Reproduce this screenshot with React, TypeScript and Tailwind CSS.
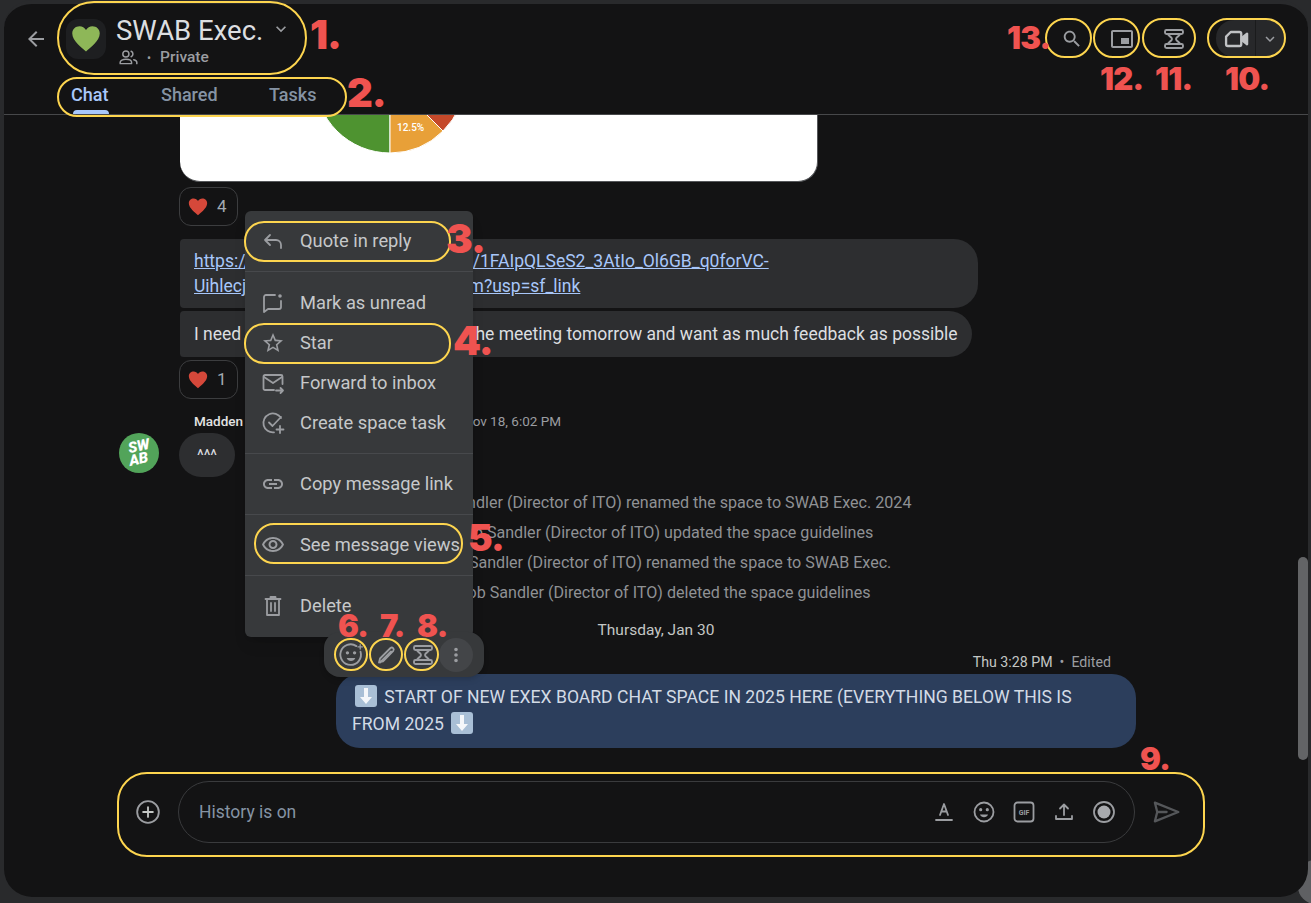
import React from 'react'

const gray = '#9b9da1'

const Filled = ({ d, size = 24, color = gray }: { d: string; size?: number; color?: string }) => (
  <svg width={size} height={size} viewBox="0 0 24 24" fill={color}>
    <path d={d} />
  </svg>
)

const Stroke = ({ size = 24, color = gray, width = 2, children }: { size?: number; color?: string; width?: number; children: React.ReactNode }) => (
  <svg width={size} height={size} viewBox="0 0 24 24" fill="none" stroke={color} strokeWidth={width} strokeLinecap="round" strokeLinejoin="round">
    {children}
  </svg>
)

const Spool = ({ size = 24 }: { size?: number }) => (
  <Stroke size={size} width={1.900}>
    <rect x="3" y="3" width="18" height="4" rx="1.500" />
    <rect x="3" y="17" width="18" height="4" rx="1.500" />
    <path d="M6 7c0 2 4 2.800 4 5s-4 3-4 5M18 7c0 2-4 2.800-4 5s4 3 4 5" />
  </Stroke>
)

const Smile = ({ size = 24 }: { size?: number }) => (
  <Stroke size={size} width={1.800}>
    <circle cx="12" cy="12" r="9.500" />
    <circle cx="8.700" cy="9.700" r=".7" fill={gray} />
    <circle cx="15.300" cy="9.700" r=".7" fill={gray} />
    <path d="M8 14.500h8c-.6 1.700-2.200 2.700-4 2.700s-3.400-1-4-2.700z" fill={gray} stroke="none" />
  </Stroke>
)

// reaction smile with the little plus at its top right
const AddReaction = () => (
  <Stroke size={26} width={1.700}>
    <path d="M17 3.800A9.500 9.500 0 1 0 20.800 9" />
    <circle cx="8.700" cy="10" r=".7" fill={gray} />
    <circle cx="15.300" cy="10" r=".7" fill={gray} />
    <path d="M8 14.800h8c-.6 1.700-2.200 2.700-4 2.700s-3.400-1-4-2.700z" fill={gray} stroke="none" />
    <path d="M20.500 2.500v4M18.500 4.500h4" strokeWidth="1.200" />
  </Stroke>
)

const Heart = ({ color, size = 20 }: { color: string; size?: number }) => (
  <svg width={size} height={size} viewBox="0 0 24 24" fill={color}>
    <path d="M12 22C9 19 1 13.500 1 7.500 1 4 3.700 1.800 6.800 1.800c2.200 0 4.100 1.100 5.200 3 1.100-1.900 3-3 5.200-3C20.300 1.800 23 4 23 7.500 23 13.500 15 19 12 22z" />
  </svg>
)

const ArrowEmoji = () => (
  <svg width="24" height="24" viewBox="0 0 24 24" className="mx-[2px] inline-block align-[-5px]">
    <rect x="1" y="1" width="22" height="22" rx="3" fill="#a9bfd6" />
    <path d="M10 4h4v9h4l-6 7-6-7h4z" fill="#f5f7fa" />
  </svg>
)

const Chip = ({ count, className }: { count: string; className: string }) => (
  <div className={`flex h-[39px] w-[59px] items-center gap-[9px] rounded-xl border border-[#3c3d3f] pl-2 ${className}`}>
    <Heart color="#d5483a" />
    <span className="text-[17px] text-[#a2a9b1]">{count}</span>
  </div>
)

const Divider = () => <div className="h-px bg-[#47494c]" />

const MenuRow = ({ icon, label }: { icon: React.ReactNode; label: string }) => (
  <div className="flex h-10 items-center">
    <div className="flex w-[55px] justify-center">{icon}</div>
    <span className="text-[18.300px] font-normal whitespace-nowrap text-[#c6c8ca]">{label}</span>
  </div>
)

const ovals = [
  'left-[57px] top-px h-[74px] w-[250px] rounded-[37px]',
  'left-[57px] top-[77px] h-[40px] w-[290px] rounded-[20px]',
  'left-[244px] top-[221px] h-[41px] w-[207px] rounded-[20px]',
  'left-[244px] top-[323px] h-[41px] w-[207px] rounded-[20px]',
  'left-[254px] top-[523px] h-[41px] w-[209px] rounded-[20px]',
  'left-[334px] top-[638px] h-[33px] w-[34px] rounded-full',
  'left-[369px] top-[638px] h-[33px] w-[34px] rounded-full',
  'left-[404px] top-[638px] h-[33px] w-[35px] rounded-full',
  'left-[117px] top-[772px] h-[85px] w-[1088px] rounded-[30px]',
  'left-[1207px] top-[18px] h-[40px] w-[79px] rounded-[20px]',
  'left-[1142px] top-[18px] h-[40px] w-[54px] rounded-[20px]',
  'left-[1093px] top-[18px] h-[40px] w-[47px] rounded-[20px]',
  'left-[1045px] top-[18px] h-[40px] w-[47px] rounded-[20px]',
]

const numbers = [
  { label: '1.', className: 'left-[310px] top-[15px] text-[40px]' },
  { label: '2.', className: 'left-[347px] top-[73px] text-[40px]' },
  { label: '3.', className: 'left-[446px] top-[219px] text-[40px]' },
  { label: '4.', className: 'left-[453px] top-[321px] text-[40px]' },
  { label: '5.', className: 'left-[468px] top-[519px] text-[37px]' },
  { label: '6.', className: 'left-[338px] top-[610px] text-[31px]' },
  { label: '7.', className: 'left-[380px] top-[610px] text-[31px]' },
  { label: '8.', className: 'left-[417px] top-[610px] text-[31px]' },
  { label: '9.', className: 'left-[1140px] top-[743px] text-[31px]' },
  { label: '10.', className: 'left-[1225px] top-[63px] text-[31px]' },
  { label: '11.', className: 'left-[1155px] top-[63px] text-[31px]' },
  { label: '12.', className: 'left-[1100px] top-[63px] text-[31px]' },
  { label: '13.', className: 'left-[1007px] top-[22px] text-[31px]' },
]

export default function App() {
  return (
    <div className="relative h-[903px] w-[1311px] overflow-hidden bg-[#292a2c] font-['Roboto',sans-serif]">
      <div className="absolute -right-[22px] top-[860px] h-[44px] w-[35px] rounded-full bg-[#5f6063]" />

      {/* Panel */}
      <div className="relative ml-1 flex h-[897px] w-[1304px] flex-col overflow-hidden rounded-[28px] border-t-4 border-[#292a2c] bg-[#131314]">
        {/* Header */}
        <header className="relative h-[111px] shrink-0 border-b border-[#47484a]">
          <div className="flex items-start justify-between pr-[24px]">
            <div className="flex items-start pl-[20px] pt-[15px]">
              <div className="mt-[8px]"><Filled size={24} d="M20 11H7.830l5.590-5.590L12 4l-8 8 8 8 1.410-1.410L7.830 13H20v-2z" /></div>
              <div className="ml-[18px] flex h-10 w-10 items-center justify-center rounded-xl bg-[#1e1f21]">
                <Heart color="#8eb758" size={30} />
              </div>
              <div className="ml-[10px] -mt-[4px]">
                <div className="flex h-[32px] items-center">
                  <span className="text-[27.500px] leading-[32px] text-[#dcdee0]">SWAB Exec.</span>
                  <span className="ml-[8px] -mt-1"><Filled size={20} d="M16.590 8.590L12 13.170 7.410 8.590 6 10l6 6 6-6z" /></span>
                </div>
                <div className="-mt-[1px] flex items-center pl-[2px]">
                  <Stroke size={21} width={1.700}>
                    <circle cx="9" cy="8" r="3.500" />
                    <path d="M2.500 19v-1.500c0-2.200 3-3.500 6.500-3.500s6.500 1.300 6.500 3.500V19zM15 4.800a3.500 3.500 0 0 1 0 6.400M18 14.500c2 .6 3.500 1.600 3.500 3V19" />
                  </Stroke>
                  <span className="ml-[8px] text-xs text-[#9b9da1]">•</span>
                  <span className="ml-[9px] text-[15.500px] font-medium text-[#9b9da1]">Private</span>
                </div>
              </div>
            </div>
            <div className="flex items-center pt-[16px]">
              <Filled size={22} d="M15.500 14h-.790l-.280-.270C15.410 12.590 16 11.110 16 9.500 16 5.910 13.090 3 9.500 3S3 5.910 3 9.500 5.910 16 9.500 16c1.610 0 3.090-.590 4.230-1.570l.270.280v.790l5 4.990L20.490 19l-4.990-5zm-6 0C7.010 14 5 11.990 5 9.500S7.010 5 9.500 5 14 7.010 14 9.500 11.990 14 9.500 14z" />
              <div className="ml-[27px]"><Filled d="M19 11h-8v6h8v-6zm2-8H3c-1.100 0-2 .9-2 2v14c0 1.100.9 1.980 2 1.980h18c1.100 0 2-.880 2-1.980V5c0-1.100-.9-2-2-2zm0 16.010H3V4.980h18v14.030z" /></div>
              <div className="ml-[28px]"><Spool /></div>
              <div className="ml-[30px] flex h-[37px] w-[68px] overflow-hidden rounded-[18px] bg-[#27282a]">
                <div className="flex w-[40px] items-center justify-center border-r border-[#1a1b1c]">
                  <Stroke size={28} color="#c0c2c4">
                    <path d="M7.500 6H15a1.500 1.500 0 0 1 1.500 1.500v9A1.500 1.500 0 0 1 15 18H5a1.500 1.500 0 0 1-1.500-1.500V10z" />
                    <path d="M17 11l4.500-3.500v9L17 13z" fill="#c0c2c4" />
                  </Stroke>
                </div>
                <div className="flex flex-1 items-center justify-center">
                  <Filled size={18} d="M16.590 8.590L12 13.170 7.410 8.590 6 10l6 6 6-6z" />
                </div>
              </div>
            </div>
          </div>
          {/* Tabs */}
          <nav className="absolute bottom-0 left-[67px] flex h-[33px] text-[18px] leading-6 font-medium">
            <div className="relative w-[90px] pt-[2px] text-[#a8c7fa]">
              Chat
              <div className="absolute bottom-0 left-[2px] h-[4px] w-[36px] rounded-t bg-[#a8c7fa]" />
            </div>
            <div className="w-[108px] pt-[2px] text-[#8593a4]">Shared</div>
            <div className="pt-[2px] text-[#8593a4]">Tasks</div>
          </nav>
        </header>

        {/* Messages */}
        <main className="min-h-0 flex-1 overflow-hidden">
          <div className="ml-[176px] h-[67px] w-[638px] overflow-hidden rounded-b-[20px] border-r border-b border-[#55575a] bg-white">
            <svg width="637" height="67" viewBox="0 0 637 67">
              <path d="M210 -37L210 38A75 75 0 0 1 135 -37Z" fill="#4e9330" stroke="#fff" />
              <path d="M210 -37L263 16A75 75 0 0 1 210 38Z" fill="#e8a038" stroke="#fff" />
              <path d="M210 -37L285 -37A75 75 0 0 1 263 16Z" fill="#c5492a" stroke="#fff" />
              <text x="217" y="16" fontSize="10" fontWeight="500" fill="#fff">12.5%</text>
            </svg>
          </div>
          <Chip count="4" className="ml-[175px] mt-[5px]" />
          <div className="ml-[176px] mt-[13px] h-[69px] w-[798px] rounded-[4px_24px_24px_4px] bg-[#2d2e30] px-[14px] py-[10px] text-[17.500px] leading-[25px] whitespace-nowrap text-[#a8c7fa] underline">
            https://docs.google.com/forms/d/e/1FAIpQLSeS2_3AtIo_Ol6GB_q0forVC-<br />
            Uihlecjw5Tq0vXnLrP2bKeZ/viewform?usp=sf_link
          </div>
          <div className="ml-[176px] mt-[3px] flex h-[46px] w-[792px] items-center rounded-[4px_24px_24px_4px] bg-[#2d2e30] px-[14px] text-[17.500px] whitespace-nowrap text-[#dcdee0]">
            I need to send this new link form at the meeting tomorrow and want as much feedback as possible
          </div>
          <Chip count="1" className="ml-[175px] mt-[3px]" />
          <div className="ml-[190px] mt-[14px] flex h-4 items-center whitespace-nowrap">
            <span className="w-[269px] text-[13.500px] font-medium text-[#e3e3e3]">Madden Reilly</span>
            <span className="text-[13.500px] text-[#9b9da1]">Nov 18, 6:02 PM</span>
          </div>
          <div className="mt-1 flex items-start pl-[115px]">
            <div className="flex h-10 w-10 flex-col items-center justify-center rounded-full bg-[#52a45a] text-[15px] leading-[13px] font-black text-white italic">
              <span className="-rotate-12">SW</span>
              <span className="-rotate-12">AB</span>
            </div>
            <div className="ml-5 h-[44px] w-[56px] rounded-[22px] bg-[#2d2e30] pt-[11px] text-center text-base text-[#dcdee0]">^^^</div>
          </div>
          <div className="mt-[11px] text-center text-[16.100px] leading-[30px] text-[#8f9194]">
            <div>Jacob Sandler (Director of ITO) renamed the space to SWAB Exec. 2024</div>
            <div>Jacob Sandler (Director of ITO) updated the space guidelines</div>
            <div>Jacob Sandler (Director of ITO) renamed the space to SWAB Exec.</div>
            <div>Jacob Sandler (Director of ITO) deleted the space guidelines</div>
          </div>
          <div className="mt-[10px] text-center text-[15.500px] leading-6 text-[#c4c7c5]">Thursday, Jan 30</div>
          <div className="mt-3 h-4 pr-[197px] text-right text-[14.200px] leading-4 text-[#9b9da1]">
            <span className="text-[#c4c7c5]">Thu 3:28 PM</span> &nbsp;•&nbsp; Edited
          </div>
          <div className="ml-[332px] mt-1 h-[74px] w-[800px] rounded-[24px] bg-[#2c3e5c] py-[10px] pl-[16px] pr-[50px] text-[17.600px] leading-[27px] text-[#d3dbe6]">
            <ArrowEmoji /> START OF NEW EXEX BOARD CHAT SPACE IN 2025 HERE (EVERYTHING BELOW THIS IS FROM 2025 <ArrowEmoji />
          </div>
        </main>

        {/* Composer */}
        <div className="flex shrink-0 items-center pb-[54px] pl-[131px]">
          <Stroke size={26} width={1.700}>
            <circle cx="12" cy="12" r="10" />
            <path d="M12 7.500v9M7.500 12h9" stroke="#c4c7c5" />
          </Stroke>
          <div className="ml-[17px] flex h-[62px] w-[957px] items-center rounded-[31px] border border-[#3a3b3d] pl-5 pr-[18px]">
            <span className="flex-1 text-[17.500px] text-[#8593a4]">History is on</span>
            <div className="flex items-center gap-[16px]">
              <Stroke size={24} width={1.800}>
                <path d="M8 15l4-11 4 11M9.300 11.500h5.400M4 20h16" />
              </Stroke>
              <Smile />
              <Stroke size={24} width={1.800}>
                <rect x="2.500" y="2.500" width="19" height="19" rx="3" />
                <text x="12" y="14.500" fontSize="7" fontWeight="700" textAnchor="middle" fill={gray} stroke="none">GIF</text>
              </Stroke>
              <Stroke size={24} width={1.800}>
                <path d="M12 15V5M8 8.500L12 4.500l4 4M4 16v3h16v-3" />
              </Stroke>
              <svg width="24" height="24" viewBox="0 0 24 24">
                <circle cx="12" cy="12" r="10" fill="none" stroke={gray} strokeWidth="1.800" />
                <circle cx="12" cy="12" r="6.500" fill="#a8aaae" />
              </svg>
            </div>
          </div>
          <div className="ml-[17px]">
            <Stroke size={28} color="#55575a" width={2}>
              <path d="M2.500 4l20 8-20 8 2-8zM4.500 12h8" />
            </Stroke>
          </div>
        </div>

        {/* Scrollbar */}
        <div className="absolute right-0 top-[553px] h-[203px] w-[10px] rounded-full bg-[#636466]" />
      </div>

      {/* Context menu */}
      <div className="absolute left-[245px] top-[211px] w-[228px] rounded-md bg-[#37393b] pb-px shadow-lg">
        <div className="py-[10px]">
          <MenuRow label="Quote in reply" icon={<Stroke size={24} width={1.800}><path d="M9 6L4 11l5 5M4 11h11a5 5 0 0 1 5 5v3" /></Stroke>} />
        </div>
        <Divider />
        <div className="pb-[10px] pt-[11px]">
          <MenuRow label="Mark as unread" icon={<Stroke size={24} width={1.800}><path d="M14 4H5a2 2 0 0 0-2 2v15l4-3h11a2 2 0 0 0 2-2v-6" /><circle cx="19" cy="5" r="1.800" fill={gray} stroke="none" /></Stroke>} />
          <MenuRow label="Star" icon={<Filled d="M22 9.240l-7.190-.620L12 2 9.190 8.630 2 9.240l5.460 4.730L5.820 21 12 17.270 18.180 21l-1.630-7.030L22 9.240zM12 15.400l-3.760 2.270 1-4.280-3.320-2.880 4.380-.380L12 6.100l1.710 4.040 4.380.380-3.320 2.880 1 4.280L12 15.400z" />} />
          <MenuRow label="Forward to inbox" icon={<Stroke size={24} width={1.800}><path d="M13 19H4a1.500 1.500 0 0 1-1.500-1.500v-12A1.500 1.500 0 0 1 4 4h16a1.500 1.500 0 0 1 1.500 1.500V13" /><path d="M3 6l9 6 9-6M15 19.500h7M19.500 17l2.500 2.500-2.500 2.500" /></Stroke>} />
          <MenuRow label="Create space task" icon={<Stroke size={24} width={1.800}><path d="M20 7A9.500 9.500 0 1 0 13 21.400M8 11.500l3.500 3.500L20 6M19 15v7M15.500 18.500h7" /></Stroke>} />
        </div>
        <Divider />
        <div className="py-[10px]">
          <MenuRow label="Copy message link" icon={<Filled d="M3.900 12c0-1.710 1.390-3.100 3.100-3.100h4V7H7c-2.760 0-5 2.240-5 5s2.240 5 5 5h4v-1.900H7c-1.710 0-3.100-1.390-3.100-3.100zM8 13h8v-2H8v2zm9-6h-4v1.900h4c1.710 0 3.100 1.390 3.100 3.100s-1.390 3.100-3.100 3.100h-4V17h4c2.760 0 5-2.240 5-5s-2.240-5-5-5z" />} />
        </div>
        <Divider />
        <div className="py-[10px]">
          <MenuRow label="See message views" icon={<Filled d="M12 6c3.790 0 7.170 2.130 8.820 5.500C19.170 14.870 15.790 17 12 17s-7.170-2.130-8.820-5.500C4.830 8.130 8.210 6 12 6m0-2C7 4 2.730 7.110 1 11.500 2.730 15.890 7 19 12 19s9.270-3.110 11-7.500C21.270 7.110 17 4 12 4zm0 5c1.380 0 2.500 1.120 2.500 2.500S13.380 14 12 14s-2.500-1.120-2.500-2.500S10.620 9 12 9m0-2c-2.480 0-4.500 2.020-4.500 4.500S9.520 16 12 16s4.500-2.020 4.500-4.500S14.480 7 12 7z" />} />
        </div>
        <Divider />
        <div className="py-[10px]">
          <MenuRow label="Delete" icon={<Stroke size={24} width={1.800}><path d="M4.500 5h15M6 5v16h12V5M10 9v8M14 9v8M9.500 5V3h5v2" /></Stroke>} />
        </div>
      </div>

      {/* Message toolbar */}
      <div className="absolute left-[324px] top-[632px] flex h-[45px] w-[160px] items-center rounded-2xl bg-[#37393b] shadow-md">
        <div className="ml-[14px]"><AddReaction /></div>
        <div className="ml-[10px]">
          <Stroke size={24} width={1.800}>
            <path d="M5 19.500l1-4L16.500 5a2 2 0 0 1 2.800 2.800L8.800 18.500zM17 8.500L6 19.500" />
          </Stroke>
        </div>
        <div className="ml-[13px]"><Spool /></div>
        <div className="ml-[4px] flex h-[34px] w-[34px] items-center justify-center rounded-full bg-[#434548]">
          <Filled size={22} d="M12 8a2 2 0 1 0 0-4 2 2 0 0 0 0 4zm0 2a2 2 0 1 0 0 4 2 2 0 0 0 0-4zm0 6a2 2 0 1 0 0 4 2 2 0 0 0 0-4z" />
        </div>
      </div>

      {/* Annotations */}
      {ovals.map((className) => (
        <div key={className} className={`absolute border-2 border-[#fdd54f] ${className}`} />
      ))}
      {numbers.map((n) => (
        <span key={n.label} className={`absolute font-['Inter',sans-serif] leading-none font-black tracking-tight text-[#ef5350] ${n.className}`}>
          {n.label}
        </span>
      ))}
    </div>
  )
}
